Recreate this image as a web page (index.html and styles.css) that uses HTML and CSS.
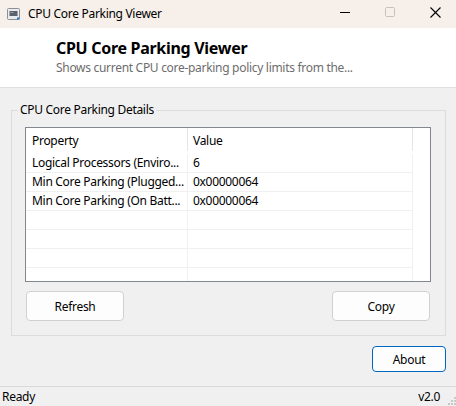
FILE: index.html
```html
<!DOCTYPE html>
<html>
<head>
<meta charset="utf-8">
<link rel="stylesheet" href="styles.css">
</head>
<body>
<div class="window">
  <div class="titlebar">
    <svg class="app-icon" width="13" height="12" viewBox="0 0 13 12">
      <rect x="0.5" y="0.5" width="12" height="11" rx="1" fill="#e9ebee" stroke="#8c9096"/>
      <rect x="2.5" y="3" width="8" height="5" fill="#5a626c"/>
      <rect x="3.5" y="4" width="3" height="1" fill="#9aa3ad"/>
      <rect x="10" y="9.5" width="2.5" height="2" fill="#2f7ad0"/>
    </svg>
    <span class="title-text">CPU Core Parking Viewer</span>
    <div class="caption-buttons">
      <svg width="10" height="10" viewBox="0 0 10 10"><rect x="0" y="5" width="10" height="1" fill="#000"/></svg>
      <svg width="10" height="10" viewBox="0 0 10 10"><rect x="0.5" y="0.5" width="9" height="9" rx="1" fill="none" stroke="#c2c2c2"/></svg>
      <svg width="11" height="11" viewBox="0 0 11 11"><path d="M0.5 0.5 L10.5 10.5 M10.5 0.5 L0.5 10.5" stroke="#000" stroke-width="1.1"/></svg>
    </div>
  </div>
  <div class="header">
    <div class="header-title">CPU Core Parking Viewer</div>
    <div class="header-sub">Shows current CPU core-parking policy limits from the...</div>
  </div>
  <div class="main">
    <div class="group">
      <span class="legend">CPU Core Parking Details</span>
      <div class="listview">
        <div class="lv-header">
          <div class="lv-cell c1">Property</div>
          <div class="lv-cell c2">Value</div>
        </div>
        <div class="lv-row">
          <div class="lv-cell c1">Logical Processors (Enviro...</div>
          <div class="lv-cell c2">6</div>
        </div>
        <div class="lv-row">
          <div class="lv-cell c1">Min Core Parking (Plugged...</div>
          <div class="lv-cell c2">0x00000064</div>
        </div>
        <div class="lv-row">
          <div class="lv-cell c1">Min Core Parking (On Batt...</div>
          <div class="lv-cell c2">0x00000064</div>
        </div>
        <div class="lv-row"><div class="lv-cell c1"></div><div class="lv-cell c2"></div></div>
        <div class="lv-row"><div class="lv-cell c1"></div><div class="lv-cell c2"></div></div>
        <div class="lv-row"><div class="lv-cell c1"></div><div class="lv-cell c2"></div></div>
        <div class="lv-row"><div class="lv-cell c1"></div><div class="lv-cell c2"></div></div>
      </div>
      <div class="group-buttons">
        <button class="btn">Refresh</button>
        <button class="btn">Copy</button>
      </div>
    </div>
    <div class="bottom-row">
      <button class="btn btn-default">About</button>
    </div>
  </div>
  <div class="statusbar">
    <span class="status-left">Ready</span>
    <span class="status-right">v2.0</span>
    <svg class="grip" width="10" height="10" viewBox="0 0 10 10">
      <rect x="8" y="0" width="2" height="2" fill="#c8c8c8"/>
      <rect x="5" y="3" width="2" height="2" fill="#c8c8c8"/>
      <rect x="8" y="3" width="2" height="2" fill="#c8c8c8"/>
      <rect x="2" y="6" width="2" height="2" fill="#c8c8c8"/>
      <rect x="5" y="6" width="2" height="2" fill="#c8c8c8"/>
      <rect x="8" y="6" width="2" height="2" fill="#c8c8c8"/>
    </svg>
  </div>
</div>
</body>
</html>
```
FILE: styles.css
```css
* { box-sizing: border-box; }
html, body {
  margin: 0;
  padding: 0;
  width: 456px;
  height: 406px;
  overflow: hidden;
  background: #f0f0f0;
  font-family: "Segoe UI", "Noto Sans", "DejaVu Sans", sans-serif;
  font-size: 12px;
  letter-spacing: -0.3px;
  color: #000;
}
.window {
  width: 456px;
  height: 406px;
  display: flex;
  flex-direction: column;
}
.titlebar {
  height: 28px;
  background: #f6efea;
  display: flex;
  align-items: center;
  flex: none;
}
.app-icon {
  margin-left: 7px;
  margin-top: 0px;
}
.title-text {
  margin-left: 8px;
  line-height: 15px;
  margin-top: -1px;
}
.caption-buttons {
  margin-left: auto;
  display: flex;
  align-items: center;
  gap: 35px;
  padding-right: 15px;
  margin-top: -4px;
}
.header {
  height: 60px;
  flex: none;
  background: #fff;
  border-bottom: 1px solid #e0e0e0;
  padding: 10px 0 0 56px;
}
.header-title {
  font-size: 16px;
  font-weight: bold;
  line-height: 20px;
}
.header-sub {
  margin-top: 2px;
  color: #6d6d6d;
  line-height: 15px;
}
.main {
  height: 298px;
  flex: none;
  display: flex;
  flex-direction: column;
}
.group {
  position: relative;
  margin: 22px 0 0 11px;
  width: 435px;
  height: 226px;
  border: 1px solid #dcdcdc;
  padding: 16px 14px 0 13px;
}
.legend {
  position: absolute;
  left: 6px;
  top: -9px;
  padding: 0 2px;
  line-height: 15px;
  background: #f0f0f0;
}
.listview {
  width: 406px;
  height: 155px;
  border: 1px solid #828790;
  background: #fff;
  overflow: hidden;
}
.lv-header {
  height: 26px;
  display: flex;
}
.lv-header .lv-cell {
  line-height: 26px;
  height: 23px;
  border-right: 1px solid #e5e5e5;
}
.lv-row {
  height: 19px;
  display: flex;
}
.lv-row .lv-cell {
  line-height: 18px;
  height: 19px;
  border-bottom: 1px solid #f0f0f0;
  border-right: 1px solid #f0f0f0;
}
.lv-cell {
  white-space: nowrap;
  overflow: hidden;
}
.c1 {
  width: 162px;
  padding-left: 6px;
}
.c2 {
  width: 225px;
  padding-left: 5px;
}
.group-buttons {
  margin-top: 9px;
  width: 406px;
  display: flex;
  justify-content: space-between;
  padding: 0 1px;
}
.btn {
  font-family: inherit;
  font-size: 12px;
  letter-spacing: -0.3px;
  color: #000;
  background: #fdfdfd;
  border: 1px solid #d0d0d0;
  border-radius: 4px;
  width: 98px;
  height: 30px;
  padding: 0;
  line-height: 15px;
}
.bottom-row {
  display: flex;
  justify-content: flex-end;
  padding-right: 10px;
  margin-top: 10px;
}
.btn-default {
  width: 74px;
  height: 26px;
  border-color: #0067c0;
}
.statusbar {
  flex: 1;
  border-top: 1px solid #d9d9d9;
  display: flex;
  align-items: center;
  line-height: 20px;
  position: relative;
}
.status-left {
  margin-left: 2px;
}
.status-right {
  margin-left: auto;
  margin-right: 16px;
}
.grip {
  position: absolute;
  right: 0;
  bottom: 0;
}
```
